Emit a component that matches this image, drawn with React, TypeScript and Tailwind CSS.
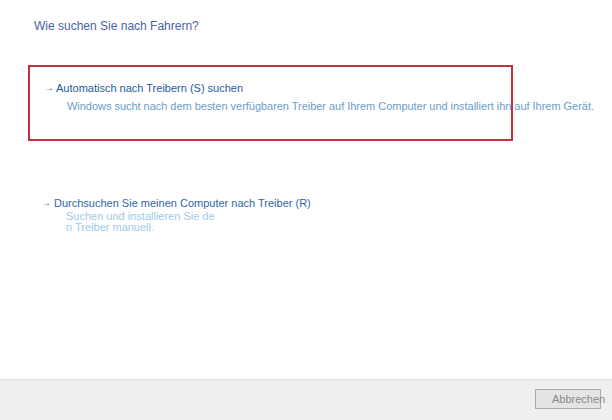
export default function App() {
  return (
    <div
      className="flex flex-col w-[612px] h-[420px] bg-white overflow-hidden"
      style={{ fontFamily: '"Liberation Sans", Arial, sans-serif' }}
    >
      <div className="flex-1 flex flex-col">
        <div className="pl-[34px] pt-[19px] text-[12px] leading-[15px] text-[#4b62a3]">
          Wie suchen Sie nach Fahrern?
        </div>

        {/* option 1, highlighted */}
        <div className="ml-[28px] mt-[31px] w-[485px] h-[76px] border-2 border-[#c3303b] pl-[14px] pt-[14px]">
          <div className="flex items-center text-[11px] leading-[14px] text-[#1e5a9e]">
            <span className="w-[12px] text-[10px] font-bold">→</span>
            <span>Automatisch nach Treibern (S) suchen</span>
          </div>
          <div className="ml-[23px] mt-[4px] whitespace-nowrap text-[11px] leading-[14px] tracking-[-0.03px] text-[#6b9ec8]">
            Windows sucht nach dem besten verfügbaren Treiber auf Ihrem Computer und installiert ihn auf Ihrem Gerät.
          </div>
        </div>

        {/* option 2 */}
        <div className="ml-[41px] mt-[55px]">
          <div className="flex items-center text-[11px] leading-[14px] text-[#2f66a8]">
            <span className="w-[13px] text-[10px] font-bold">→</span>
            <span>Durchsuchen Sie meinen Computer nach Treiber (R)</span>
          </div>
          <div className="ml-[25px] mt-[1px] text-[11px] leading-[11px] text-[#9ccbe6]">
            Suchen und installieren Sie de
            <br />n Treiber manuell.
          </div>
        </div>
      </div>

      <div className="h-[41px] shrink-0 border-t border-[#dedede] bg-[#efefef] flex justify-end items-start pt-[9px] pr-[11px]">
        <div className="w-[66px] h-[20px] border border-[#ababab] bg-[#e4e4e4] text-[11px] leading-[18px] text-[#888888] pl-[16px] whitespace-nowrap overflow-visible">
          Abbrechen
        </div>
      </div>
    </div>
  );
}
